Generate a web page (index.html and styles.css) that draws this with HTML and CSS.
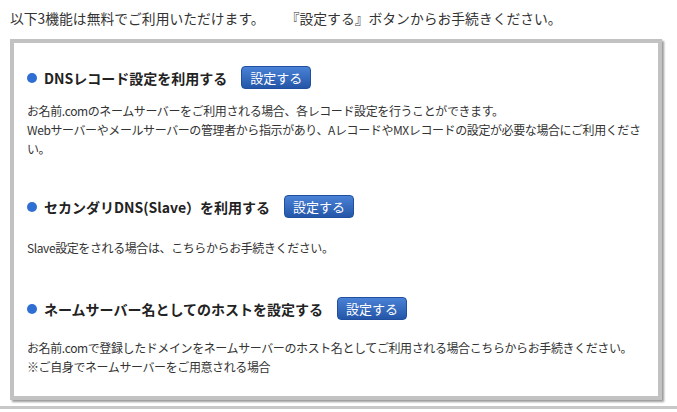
FILE: index.html
```html
<!DOCTYPE html>
<html lang="ja">
<head>
    <meta charset="UTF-8">
    <meta name="viewport" content="width=device-width, initial-scale=1.0">
    <title>DNS関連機能</title>
    <link rel="stylesheet" href="styles.css">
</head>
<body>
    <p class="lead">以下3機能は無料でご利用いただけます。<span class="lead-note">『設定する』ボタンからお手続きください。</span></p>
    <div class="box">
        <div class="item">
            <h3 class="item-title"><span class="dot"></span>DNSレコード設定を利用する<button class="set-btn">設定する</button></h3>
            <p class="item-text">お名前.comのネームサーバーをご利用される場合、各レコード設定を行うことができます。<br>Webサーバーやメールサーバーの管理者から指示があり、AレコードやMXレコードの設定が必要な場合にご利用ください。</p>
        </div>
        <div class="item">
            <h3 class="item-title"><span class="dot"></span>セカンダリDNS(Slave）を利用する<button class="set-btn">設定する</button></h3>
            <p class="item-text">Slave設定をされる場合は、こちらからお手続きください。</p>
        </div>
        <div class="item">
            <h3 class="item-title"><span class="dot"></span>ネームサーバー名としてのホストを設定する<button class="set-btn">設定する</button></h3>
            <p class="item-text">お名前.comで登録したドメインをネームサーバーのホスト名としてご利用される場合こちらからお手続きください。<br>※ご自身でネームサーバーをご用意される場合</p>
        </div>
    </div>
    <div class="footer-line"></div>
</body>
</html>
```

FILE: styles.css
```css
body {
    font-family: "Noto Sans CJK JP", "Noto Sans", sans-serif;
    margin: 0;
    padding: 0;
    background-color: #fff;
    color: #333;
}
.lead {
    font-size: 13.8px;
    line-height: 18px;
    margin: 0;
    padding: 9px 10px 0;
}
.lead-note {
    margin-left: 28px;
}
.box {
    margin: 12px 15px 0 10px;
    border: 4px solid #c2c2c2;
    box-shadow: 2px 2px 2px #9a9a9a;
    background: #fff;
    padding: 0 12px 20px 13px;
}
.item {
    padding-top: 23px;
}
.item:nth-child(2) {
    padding-top: 37px;
}
.item:nth-child(3) {
    padding-top: 40px;
}
.item-title {
    display: flex;
    align-items: center;
    font-size: 14px;
    font-weight: bold;
    color: #222;
    margin: 0;
    height: 23px;
}
.dot {
    width: 10px;
    height: 10px;
    border-radius: 50%;
    background: #2f6ed2;
    margin-right: 7px;
}
.set-btn {
    margin-left: 14px;
    height: 23px;
    padding: 0 8px;
    font-family: inherit;
    font-size: 13px;
    color: #fff;
    border: 1px solid #1f4f9e;
    border-radius: 4px;
    background: linear-gradient(#4a82d6, #2456a8);
    cursor: pointer;
}
.item-text {
    font-size: 12px;
    line-height: 19px;
    letter-spacing: -0.4px;
    margin: 12px 0 0;
}
.item:nth-child(2) .item-text {
    margin-top: 20px;
}
.item:nth-child(3) .item-text {
    margin-top: 18px;
}
.footer-line {
    margin-top: 6px;
    border-top: 3px solid #c8c8c8;
}
```
